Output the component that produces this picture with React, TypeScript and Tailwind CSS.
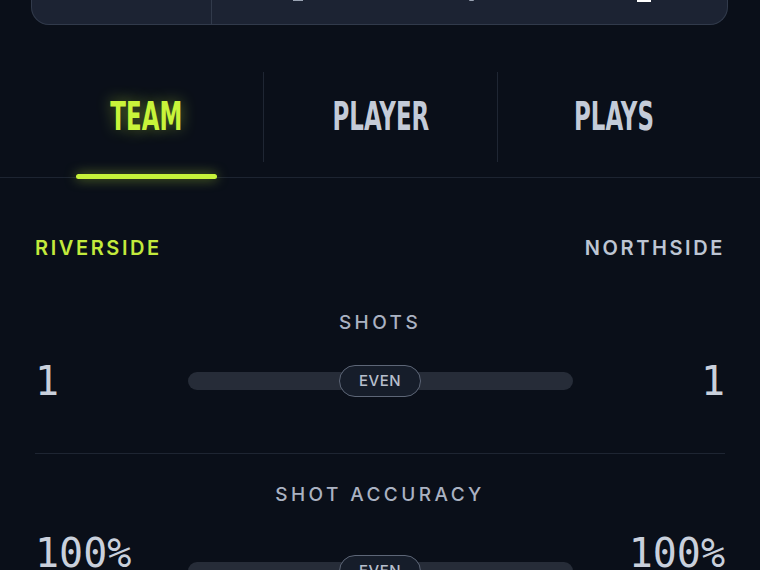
import React from "react";

type Stat = {
  label: string;
  home: string;
  away: string;
};

const tabs = ["TEAM", "PLAYER", "PLAYS"];

const stats: Stat[] = [
  { label: "SHOTS", home: "1", away: "1" },
  { label: "SHOT ACCURACY", home: "100%", away: "100%" },
];

function EvenBar({ low }: { low?: boolean }) {
  return (
    <div className={`relative flex items-center justify-center ${low ? "mt-[29px]" : "mt-[11px]"}`}>
      <div className="h-[18px] w-full rounded-full bg-[#262c38]" />
      <div className="absolute flex h-[32px] w-[82px] items-center justify-center rounded-full border-[1.5px] border-[#5d6677] bg-[#161d2a] text-[15px] font-medium tracking-[0.03em] text-[#b7bfcd]">
        EVEN
      </div>
    </div>
  );
}

export default function App() {
  return (
    <div
      className="min-h-screen w-full overflow-hidden bg-[#0a0f19] text-[#c3cad8]"
      style={{ fontFamily: "Inter, 'Noto Sans', sans-serif" }}
    >
      {/* score card, mostly scrolled off the top */}
      <div className="mx-[31px] mr-[32px] -mt-[60px] flex h-[85px] rounded-b-[18px] border border-t-0 border-[#313a4b] bg-[#1c2333]">
        <div className="w-[180px] border-r border-[#313a4b]" />
        <div className="relative flex-1">
          <span className="absolute bottom-[23px] left-[81px] h-[2px] w-[10px] bg-[#9aa3b3]" />
          <span className="absolute bottom-[23px] left-[257px] h-[2px] w-[5px] rounded-full bg-[#9aa3b3]" />
          <span className="absolute bottom-[22px] left-[425px] h-[3px] w-[14px] bg-white" />
        </div>
      </div>

      {/* tabs */}
      <nav className="border-b border-[#1d2431] pb-[15px]">
        <div className="mx-[30px] mt-[47px] grid grid-cols-3">
          {tabs.map((tab, i) => (
            <div
              key={tab}
              className={`relative flex h-[90px] items-center justify-center ${i > 0 ? "border-l border-[#1f2633]" : ""}`}
            >
              <span
                className={`inline-block scale-x-[0.85] scale-y-[1.3] text-[30px] font-bold leading-none ${
                  i === 0
                    ? "text-[#c8f43a] [text-shadow:0_0_14px_rgba(200,244,58,0.45)]"
                    : "text-[#c4cbd8]"
                }`}
                style={{ fontFamily: "'Liberation Sans Narrow', 'Arial Narrow', 'DejaVu Sans Condensed', sans-serif" }}
              >
                {tab}
              </span>
              {i === 0 && (
                <div className="absolute left-[46px] right-[46px] top-[102px] h-[5px] rounded-full bg-[#c6f23a] shadow-[0_0_12px_rgba(198,242,58,0.55)]" />
              )}
            </div>
          ))}
        </div>
      </nav>

      <div className="px-[35px]">
        {/* team names */}
        <div className="mt-[62px] flex h-[16px] items-center justify-between text-[20px] font-semibold leading-none tracking-[0.13em]">
          <span className="text-[#c3ea3c]">RIVERSIDE</span>
          <span className="text-[#bdc5d3]">NORTHSIDE</span>
        </div>

        {stats.map((stat, i) => (
          <div key={stat.label} className={i > 0 ? "mt-[52px] border-t border-[#1e2532]" : ""}>
            <div
              className={`flex h-[16px] items-center justify-center text-[19px] font-medium leading-none tracking-[0.18em] text-[#aab2c2] ${
                i > 0 ? "mt-[32px]" : "mt-[58px]"
              }`}
            >
              {stat.label}
            </div>
            <div className="mt-[31px] grid grid-cols-[1fr_385px_1fr] items-start">
              <span
                className="flex h-[40px] items-center text-[40px] leading-none text-[#c9d0dc] slashed-zero"
                style={{ fontFamily: "'DejaVu Sans Mono', 'Liberation Mono', monospace" }}
              >
                {stat.home}
              </span>
              <EvenBar low={i > 0} />
              <span
                className="flex h-[40px] items-center justify-end text-[40px] leading-none text-[#c9d0dc] slashed-zero"
                style={{ fontFamily: "'DejaVu Sans Mono', 'Liberation Mono', monospace" }}
              >
                {stat.away}
              </span>
            </div>
          </div>
        ))}
      </div>
    </div>
  );
}
